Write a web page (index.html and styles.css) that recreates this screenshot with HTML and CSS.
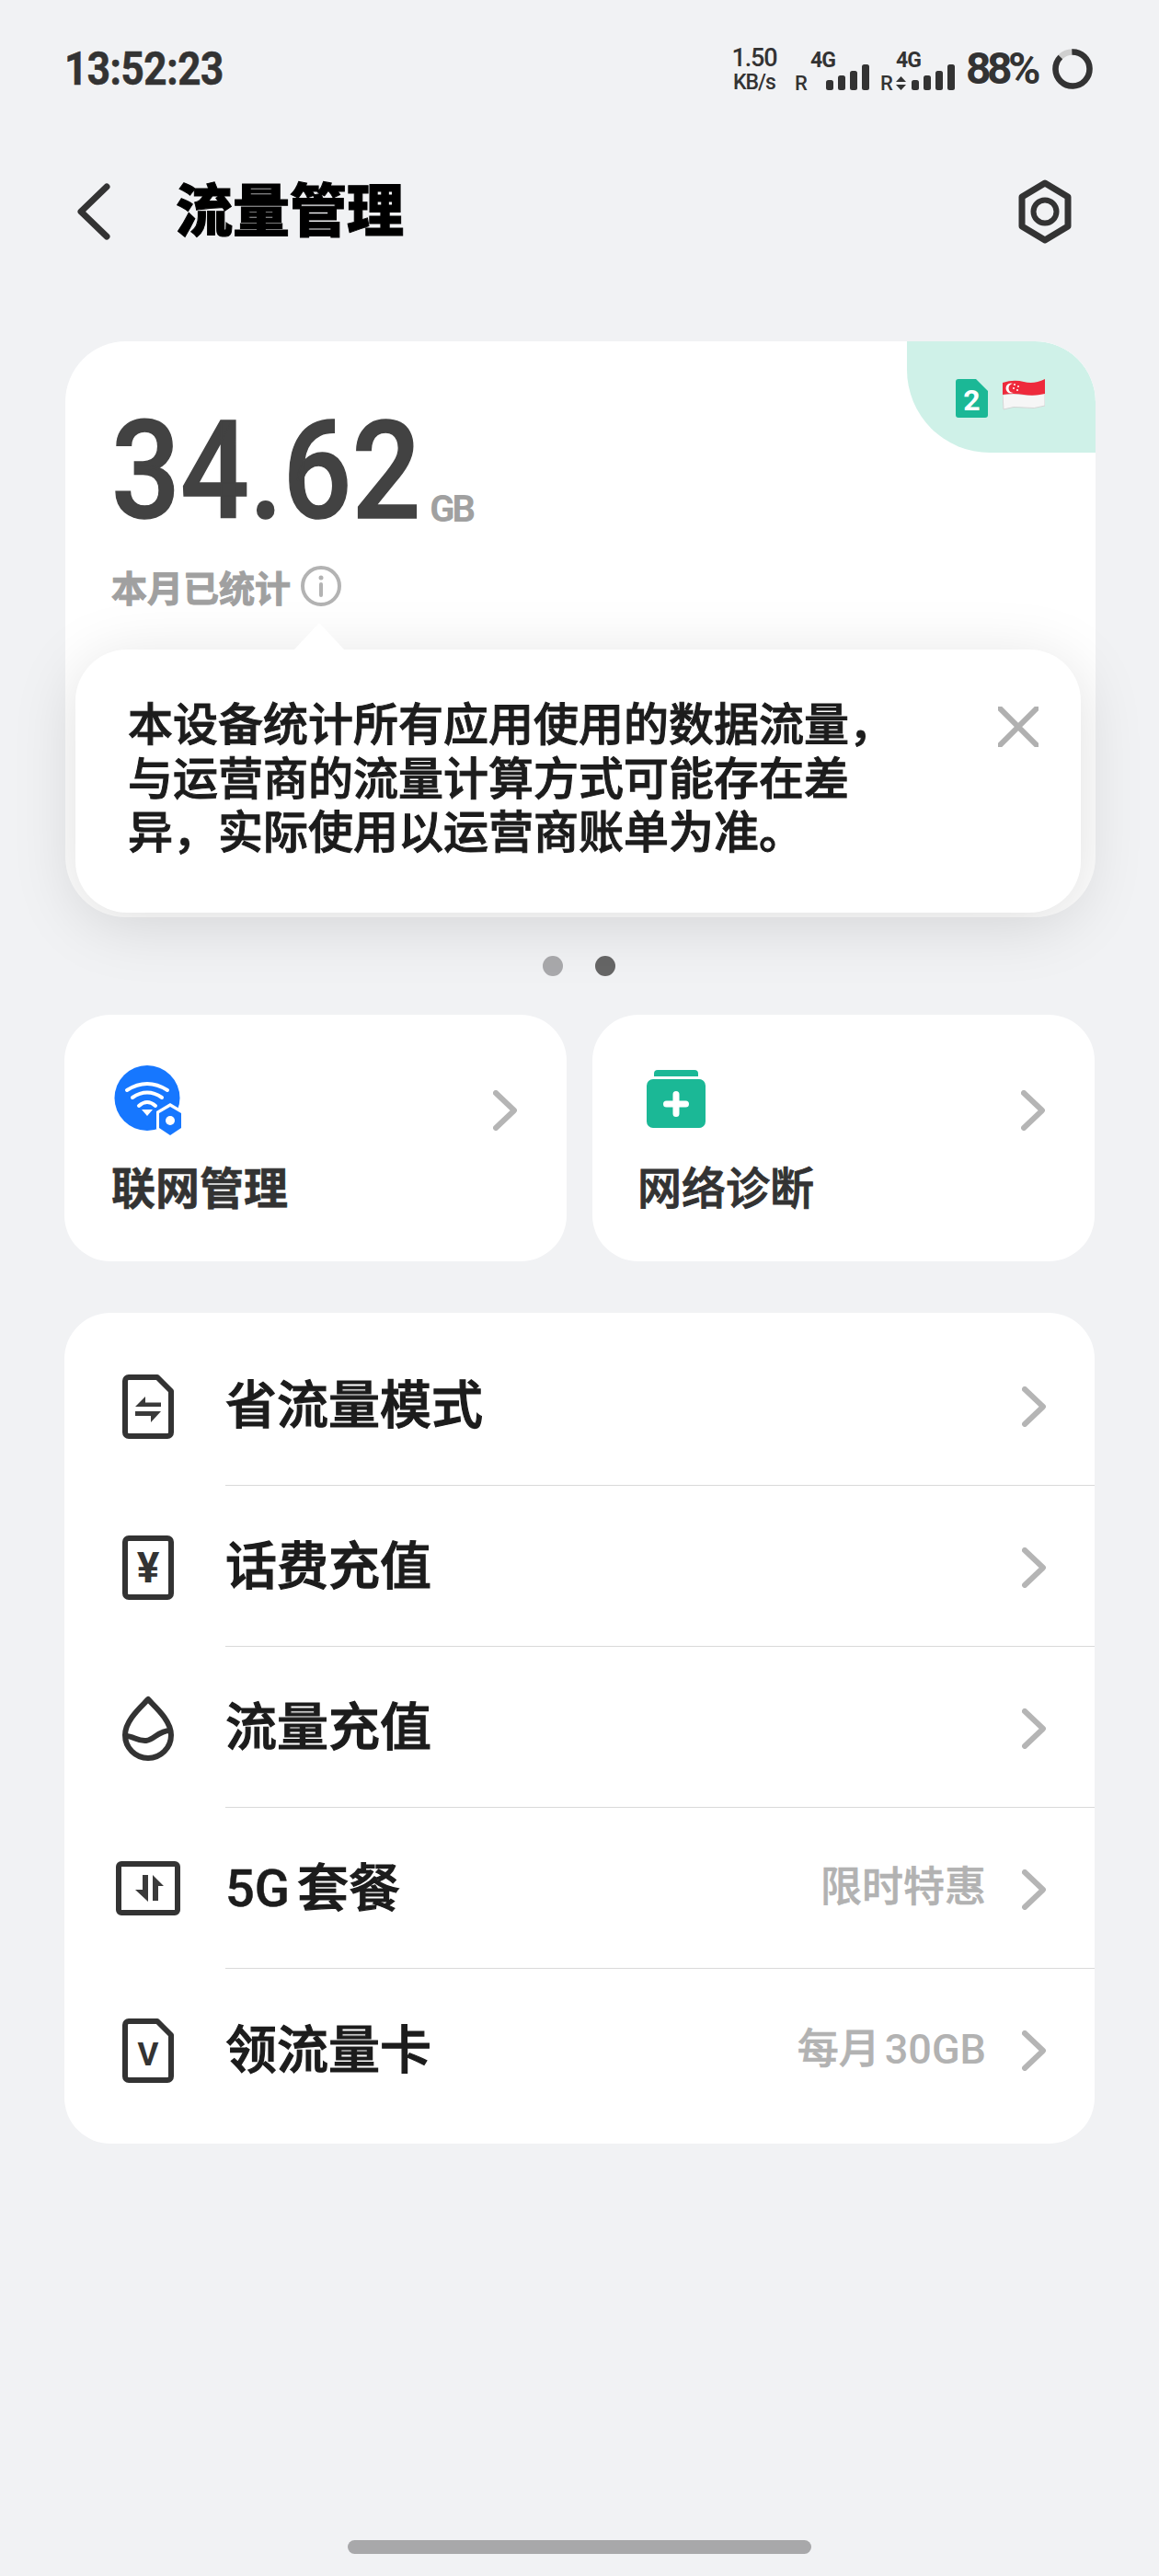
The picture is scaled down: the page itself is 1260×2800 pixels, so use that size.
FILE: index.html
```html
<!DOCTYPE html>
<html lang="zh-CN">
<head>
<meta charset="utf-8">
<title>流量管理</title>
<link rel="stylesheet" href="styles.css">
</head>
<body>
<div class="phone">
  <div class="status">
    <div class="time">13:52:23</div>
    <div class="status-right">
      <div class="speed"><span class="speed-num">1.50</span><span class="speed-unit">KB/s</span></div>
      <svg class="sig sig-a" width="82" height="60" viewBox="0 -8 82 60">
        <text class="sig-r" x="0" y="41">R</text>
        <text class="sig-g" x="17" y="16">4G</text>
        <rect class="bar" x="34" y="30" width="8" height="11" rx="2.5"/>
        <rect class="bar" x="47" y="25" width="8" height="16" rx="2.5"/>
        <rect class="bar" x="60" y="20" width="8" height="21" rx="2.5"/>
        <rect class="bar" x="73" y="13" width="8" height="28" rx="2.5"/>
      </svg>
      <svg class="sig sig-b" width="82" height="60" viewBox="0 -8 82 60">
        <text class="sig-r" x="0" y="41">R</text>
        <text class="sig-g" x="17" y="16">4G</text>
        <path class="bar" d="M17 32 L22.5 26 L28 32 Z M17 35 L28 35 L22.5 41 Z"/>
        <rect class="bar" x="34" y="30" width="8" height="11" rx="2.5"/>
        <rect class="bar" x="47" y="25" width="8" height="16" rx="2.5"/>
        <rect class="bar" x="60" y="20" width="8" height="21" rx="2.5"/>
        <rect class="bar" x="73" y="13" width="8" height="28" rx="2.5"/>
      </svg>
      <div class="battery-text">88%</div>
      <svg class="ring" width="44" height="44" viewBox="0 0 44 44">
        <circle class="ring-bg" cx="22" cy="22" r="18.5"/>
        <circle class="ring-fg" cx="22" cy="22" r="18.5" pathLength="100" stroke-dasharray="88 12" transform="rotate(-92 22 22)"/>
      </svg>
    </div>
  </div>

  <header class="topbar">
    <svg class="back" width="38" height="62" viewBox="0 0 38 62"><path class="icon-line thick" d="M33 4 L5 31 L33 58"/></svg>
    <h1 class="title">流量管理</h1>
    <svg class="gear" width="60" height="70" viewBox="0 0 60 70">
      <path class="icon-line thick" d="M30 4 L55 19 V51 L30 66 L5 51 V19 Z"/>
      <circle class="icon-line" cx="30" cy="35" r="12.5"/>
    </svg>
  </header>

  <main class="content">
    <section class="usage">
      <div class="usage-card">
        <div class="sim-tag">
          <svg width="35" height="42" viewBox="0 0 35 42">
            <path class="sim-body" d="M3 0 H22 L35 13 V39 a3 3 0 0 1 -3 3 H3 a3 3 0 0 1 -3 -3 V3 a3 3 0 0 1 3 -3 Z"/>
            <text class="sim-num" x="17.5" y="34">2</text>
          </svg>
          <svg width="46" height="34" viewBox="0 0 46 34">
            <path class="flag-white" d="M0 17 Q12 15 23 17 T46 15 V29 Q34 33 23 31 T1 33 Z"/>
            <path class="flag-red" d="M0 4 Q12 0 23 3 T46 0 V16 Q34 19 23 17 T0 17 Z"/>
            <circle class="flag-moon" cx="9" cy="10" r="5.5"/>
            <circle class="flag-red" cx="11.5" cy="10" r="5"/>
            <circle class="flag-moon" cx="13" cy="6" r="1"/>
            <circle class="flag-moon" cx="17" cy="8" r="1"/>
            <circle class="flag-moon" cx="12" cy="10" r="1"/>
            <circle class="flag-moon" cx="16" cy="12" r="1"/>
          </svg>
        </div>
        <div class="amount"><span class="amount-num">34.62</span><span class="amount-unit">GB</span></div>
        <div class="period">
          <span>本月已统计</span>
          <svg width="44" height="44" viewBox="0 0 44 44">
            <circle class="info-line" cx="22" cy="22" r="20"/>
            <circle class="info-dot" cx="22" cy="13" r="2.5"/>
            <path class="info-line" d="M22 20 V32"/>
          </svg>
        </div>
      </div>
      <div class="tip">
        <div class="tip-arrow"></div>
        <p class="tip-text">本设备统计所有应用使用的数据流量，<br>与运营商的流量计算方式可能存在差<br>异，实际使用以运营商账单为准。</p>
        <svg class="tip-close" width="44" height="44" viewBox="0 0 44 44"><path class="close-line" d="M2 2 L42 42 M42 2 L2 42"/></svg>
      </div>
    </section>

    <div class="dots"><span class="dot"></span><span class="dot dot-on"></span></div>

    <div class="quick">
      <a class="quick-card">
        <div class="quick-head">
          <svg width="76" height="78" viewBox="0 0 76 78">
            <circle class="wifi-bg" cx="36" cy="35.5" r="35.5"/>
            <path class="wifi-arc" d="M14 27 Q36 13 58 27"/>
            <path class="wifi-arc" d="M20 35 Q36 24 52 35"/>
            <path class="wifi-arc" d="M27 44 Q36 36 45 44"/>
            <path class="wifi-white" d="M30 48 H42 L36 55 Z"/>
            <path class="wifi-white" d="M61 41 L76 50 V69 L61 78 L46 69 V50 Z"/>
            <path class="wifi-bg" d="M61 45 L73 52 V68 L61 76 L49 68 V52 Z"/>
            <circle class="wifi-white" cx="61" cy="60" r="5"/>
          </svg>
          <svg class="chev quick-chev" width="26" height="44" viewBox="0 0 26 44"><path class="chev-line" d="M3 3 L23 22 L3 41"/></svg>
        </div>
        <div class="quick-label">联网管理</div>
      </a>
      <a class="quick-card quick-alt">
        <div class="quick-head">
          <svg width="76" height="78" viewBox="0 0 76 78">
            <path class="teal" d="M8 12 V9 a4 4 0 0 1 4 -4 H52 a4 4 0 0 1 4 4 V12 Z"/>
            <rect class="teal" x="0" y="15" width="64" height="53" rx="7"/>
            <path class="plus" d="M32 31.5 V52.5 M21.5 42 H42.5"/>
          </svg>
          <svg class="chev quick-chev" width="26" height="44" viewBox="0 0 26 44"><path class="chev-line" d="M3 3 L23 22 L3 41"/></svg>
        </div>
        <div class="quick-label">网络诊断</div>
      </a>
    </div>

    <section class="list">
      <div class="row">
        <svg class="row-icon" width="70" height="72" viewBox="0 0 70 72">
          <path class="icon-line" d="M14 4 H45 L60 19 V64 a4 4 0 0 1 -4 4 H14 a4 4 0 0 1 -4 -4 V8 a4 4 0 0 1 4 -4 Z"/>
          <path class="icon-fill" d="M21 36 L32 25 V31.5 H49 V36 Z M21 41 H49 L38 53 V46 H21 Z"/>
        </svg>
        <div class="row-body"><span class="row-title">省流量模式</span><svg class="chev" width="26" height="44" viewBox="0 0 26 44"><path class="chev-line" d="M3 3 L23 22 L3 41"/></svg></div>
      </div>
      <div class="row">
        <svg class="row-icon" width="70" height="72" viewBox="0 0 70 72">
          <rect class="icon-line" x="10" y="4" width="50" height="64" rx="4"/>
          <text class="icon-text yen" x="35" y="52">¥</text>
        </svg>
        <div class="row-body"><span class="row-title">话费充值</span><svg class="chev" width="26" height="44" viewBox="0 0 26 44"><path class="chev-line" d="M3 3 L23 22 L3 41"/></svg></div>
      </div>
      <div class="row">
        <svg class="row-icon" width="70" height="72" viewBox="0 0 70 72">
          <path class="icon-line" d="M35 4 C30 10 10 26 10 43 A25 25 0 0 0 60 43 C60 26 40 10 35 4 Z"/>
          <path class="icon-line" d="M11 44 C19 44 24 50 33 49 C42 48 46 38 59 38"/>
        </svg>
        <div class="row-body"><span class="row-title">流量充值</span><svg class="chev" width="26" height="44" viewBox="0 0 26 44"><path class="chev-line" d="M3 3 L23 22 L3 41"/></svg></div>
      </div>
      <div class="row">
        <svg class="row-icon" width="70" height="72" viewBox="0 0 70 72">
          <rect class="icon-line" x="3" y="8" width="64" height="53" rx="3"/>
          <path class="icon-fill" d="M29 20 H35 V49 L21 36 H29 Z M40 20 L52 32 H46 V48 H40 Z"/>
        </svg>
        <div class="row-body"><span class="row-title"><span class="latin">5G</span>套餐</span><span class="row-value">限时特惠</span><svg class="chev" width="26" height="44" viewBox="0 0 26 44"><path class="chev-line" d="M3 3 L23 22 L3 41"/></svg></div>
      </div>
      <div class="row">
        <svg class="row-icon" width="70" height="72" viewBox="0 0 70 72">
          <path class="icon-line" d="M14 4 H45 L60 19 V64 a4 4 0 0 1 -4 4 H14 a4 4 0 0 1 -4 -4 V8 a4 4 0 0 1 4 -4 Z"/>
          <text class="icon-text vee" x="35" y="52">V</text>
        </svg>
        <div class="row-body"><span class="row-title">领流量卡</span><span class="row-value">每月<span class="value-latin">30GB</span></span><svg class="chev" width="26" height="44" viewBox="0 0 26 44"><path class="chev-line" d="M3 3 L23 22 L3 41"/></svg></div>
      </div>
    </section>
  </main>

  <div class="home-wrap"><div class="home-bar"></div></div>
</div>
</body>
</html>
```

FILE: styles.css
```css
* { box-sizing: border-box; }
html, body { margin: 0; padding: 0; }
body {
  background: #f1f2f4;
  font-family: Roboto, "Noto Sans CJK SC", sans-serif;
  color: #1c1c1c;
}
.phone {
  width: 1260px;
  height: 2800px;
  overflow: hidden;
  display: flex;
  flex-direction: column;
}
svg { display: block; flex: none; }

/* status bar */
.status {
  height: 150px;
  padding: 0 72px 0 70px;
  display: flex;
  align-items: center;
  justify-content: space-between;
}
.time {
  font-size: 50px;
  line-height: 50px;
  font-weight: 700;
  letter-spacing: -.5px;
  -webkit-text-stroke: .6px #333;
  transform: scaleX(.88);
  transform-origin: left center;
  color: #333;
}
.status-right {
  display: flex;
  align-items: center;
}
.speed {
  display: flex;
  flex-direction: column;
  align-items: center;
  width: 46px;
  color: #333;
  margin-right: 21px;
}
.speed-num {
  font-size: 27px;
  line-height: 28px;
  font-weight: 500;
  letter-spacing: -1.2px;
}
.speed-unit {
  font-size: 23px;
  line-height: 25px;
  font-weight: 500;
  letter-spacing: -1px;
}
.sig { fill: #333; margin-top: 7px; }
.sig-a { margin-right: 11px; }
.sig-b { margin-right: 11px; }
.sig-r { font-size: 22px; font-weight: 500; }
.sig-g { font-size: 23px; font-weight: 700; letter-spacing: -1px; }
.bar { fill: #333; }
.battery-text {
  font-size: 48px;
  line-height: 50px;
  font-weight: 700;
  letter-spacing: -4.5px;
  color: #333;
  margin-right: 17px;
}
.ring-bg, .ring-fg { fill: none; stroke-width: 6.5px; }
.ring-bg { stroke: #cfcfcf; }
.ring-fg { stroke: #333; }

/* top bar */
.topbar {
  height: 160px;
  padding: 0 94px 0 83px;
  display: flex;
  align-items: center;
}
.title {
  margin: -10px 0 0 70px;
  flex: 1;
  font-family: "Noto Sans CJK SC", sans-serif;
  font-size: 62px;
  line-height: 70px;
  font-weight: 900;
  -webkit-text-stroke: 1px #000;
  color: #000;
}
.icon-line {
  fill: none;
  stroke: #333;
  stroke-width: 6px;
  stroke-linejoin: round;
  stroke-linecap: round;
}
.thick { stroke-width: 7px; }
.icon-fill { fill: #3a3a3a; }
.icon-text {
  fill: #333;
  text-anchor: middle;
  font-family: Roboto, sans-serif;
  font-weight: 700;
}
.yen { font-size: 46px; }
.vee { font-size: 35px; }

/* content */
.content {
  padding: 61px 70px 0;
  display: flex;
  flex-direction: column;
}
.usage {
  position: relative;
  height: 626px;
  margin: 0 -1px 0 1px;
}
.usage-card {
  position: relative;
  height: 626px;
  background: #fff;
  border-radius: 66px;
  overflow: hidden;
  padding: 66px 0 0 50px;
}
.sim-tag {
  position: absolute;
  top: 0;
  right: 0;
  width: 205px;
  height: 121px;
  background: #cff1e8;
  border-radius: 0 66px 0 90px;
  display: flex;
  align-items: flex-start;
  gap: 16px;
  padding: 41px 0 0 53px;
}
.sim-body { fill: #1bb896; }
.sim-num {
  fill: #fff;
  font-size: 32px;
  font-weight: 700;
  text-anchor: middle;
}
.flag-white { fill: #f6f6f6; stroke: #d5d5d5; stroke-width: 1px; }
.flag-red { fill: #ee2a3c; }
.flag-moon { fill: #fff; }
.amount {
  display: flex;
  align-items: flex-end;
  height: 150px;
}
.amount-num {
  font-size: 149px;
  line-height: 150px;
  font-weight: 500;
  -webkit-text-stroke: 1.5px #424242;
  transform: scaleX(.885);
  transform-origin: left center;
  color: #424242;
}
.amount-unit {
  margin: 0 0 13px -34px;
  font-size: 40px;
  line-height: 40px;
  font-weight: 700;
  letter-spacing: -3px;
  color: #a0a0a0;
}
.period {
  display: flex;
  align-items: center;
  margin-top: 28px;
  gap: 11px;
  font-family: "Noto Sans CJK SC", sans-serif;
  font-size: 39px;
  line-height: 44px;
  font-weight: 700;
  -webkit-text-stroke: 1px #a0a0a0;
  color: #a0a0a0;
}
.info-line { fill: none; stroke: #b3b3b3; stroke-width: 4px; stroke-linecap: round; }
.info-dot { fill: #b3b3b3; }

.tip {
  position: absolute;
  left: 11px;
  top: 335px;
  width: 1093px;
  height: 286px;
  background: #fff;
  border-radius: 56px;
  box-shadow: 0 12px 70px rgba(0, 0, 0, .13);
  padding: 49px 0 0 57px;
}
.tip-arrow {
  position: absolute;
  left: 237px;
  top: -29px;
  width: 56px;
  height: 30px;
  background: #fff;
  clip-path: polygon(50% 0, 100% 100%, 0 100%);
}
.tip-text {
  margin: 0;
  font-family: "Noto Sans CJK SC", sans-serif;
  font-size: 49px;
  line-height: 58.5px;
  font-weight: 500;
  -webkit-text-stroke: 1px #1c1c1c;
  color: #1c1c1c;
}
.tip-close {
  position: absolute;
  right: 46px;
  top: 62px;
}
.close-line { stroke: #b0b0b0; stroke-width: 6px; stroke-linecap: round; fill: none; }

.dots {
  display: flex;
  justify-content: center;
  gap: 35px;
  margin: 42px 0;
  padding-right: 2px;
}
.dot {
  width: 22px;
  height: 22px;
  border-radius: 50%;
  background: #a9a9ac;
}
.dot-on { background: #666; }

/* quick cards */
.quick {
  display: grid;
  grid-template-columns: 546px 546px;
  gap: 28px;
}
.quick-card {
  display: flex;
  flex-direction: column;
  height: 268px;
  background: #fff;
  border-radius: 50px;
  padding: 55px 54px 0 54px;
}
.quick-alt { padding-left: 59px; }
.quick-head {
  display: flex;
  justify-content: space-between;
  align-items: flex-start;
  height: 102px;
}
.quick-chev { margin-top: 27px; }
.quick-label {
  margin-left: -3px;
  font-family: "Noto Sans CJK SC", sans-serif;
  font-size: 48px;
  line-height: 56px;
  font-weight: 700;
  -webkit-text-stroke: .6px #333;
  color: #333;
}
.quick-alt .quick-label {
  margin-left: -10px;
  font-weight: 500;
  -webkit-text-stroke: 1px #333;
}
.chev-line {
  fill: none;
  stroke: #b5b5b5;
  stroke-width: 6px;
  stroke-linecap: round;
  stroke-linejoin: round;
}

/* list */
.list {
  margin-top: 56px;
  background: #fff;
  border-radius: 50px;
  padding: 13px 0 15px;
}
.row {
  display: flex;
  align-items: stretch;
  height: 175px;
  padding-left: 56px;
}
.row-icon {
  align-self: center;
  margin: 2px 49px 0 0;
}
.row-body {
  flex: 1;
  display: flex;
  align-items: center;
  padding-right: 53px;
  border-bottom: 1px solid #d9d9d9;
}
.row:last-child .row-body { border-bottom: 0; }
.row-title {
  flex: 1;
  margin-top: 2px;
  font-size: 56px;
  line-height: 70px;
  font-weight: 500;
  -webkit-text-stroke: 1.2px #1c1c1c;
  color: #1c1c1c;
}
.latin {
  margin-right: 8px;
  -webkit-text-stroke: .5px #1c1c1c;
}
.row-value {
  font-size: 45px;
  line-height: 60px;
  font-weight: 500;
  -webkit-text-stroke: .6px #b2b2b2;
  color: #b2b2b2;
  margin-right: 39px;
}
.value-latin { margin-left: 5px; -webkit-text-stroke: 0; }
.row-body .chev { margin-top: 3px; }

/* home indicator */
.home-wrap {
  flex: 1;
  display: flex;
  align-items: flex-end;
  justify-content: center;
  padding-bottom: 24px;
}
.home-bar {
  width: 504px;
  height: 15px;
  border-radius: 8px;
  background: #a8a8aa;
}
.wifi-bg { fill: #1677ff; }
.wifi-white { fill: #fff; }
.wifi-arc { fill: none; stroke: #fff; stroke-width: 4px; stroke-linecap: round; }
.teal { fill: #1bb896; }
.plus { fill: none; stroke: #fff; stroke-width: 7px; stroke-linecap: round; }
```
